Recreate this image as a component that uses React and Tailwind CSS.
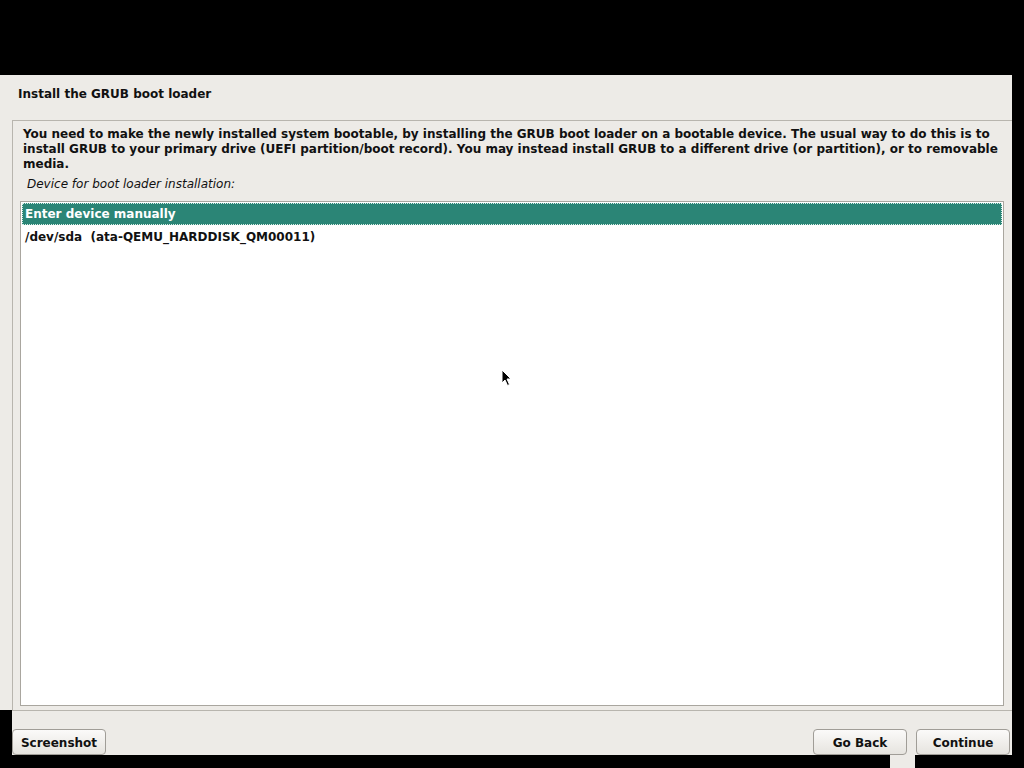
export default function App() {
  return (
    <div
      className="w-[1024px] h-[768px] bg-black overflow-hidden text-[#111]"
      style={{ fontFamily: '"DejaVu Sans", "Liberation Sans", sans-serif' }}
    >
      <div className="h-[75px]" />
      <div className="w-[1012px] h-[635px] bg-[#edebe7] flex flex-col">
        <div className="h-[45px] pt-[12px] pl-[18px] text-[12px] font-bold leading-[15px]">
          Install the GRUB boot loader
        </div>
        <div className="ml-[12px] flex-1 border-t border-l border-[#b8b5ae] flex flex-col pl-[7px] pr-[8px] pb-[4px]">
          <p className="mt-[6px] pl-[3px] text-[12px] font-bold leading-[15px]">
            You need to make the newly installed system bootable, by installing the GRUB boot loader on a bootable device. The usual way to do this is to install GRUB to your primary drive (UEFI partition/boot record). You may instead install GRUB to a different drive (or partition), or to removable media.
          </p>
          <div className="mt-[5px] pl-[7px] text-[12px] italic leading-[15px]">
            Device for boot loader installation:
          </div>
          <div className="mt-[9px] flex-1 bg-white border border-[#a9a69f] p-[1px] flex flex-col">
            <div className="h-[22px] bg-[#2b8576] border border-dotted border-[#d8efe8] text-white font-bold text-[12px] flex items-center pl-[2px]">
              Enter device manually
            </div>
            <div className="h-[23px] font-bold text-[12px] flex items-center pl-[3px] whitespace-pre">
              /dev/sda  (ata-QEMU_HARDDISK_QM00011)
            </div>
            <div className="flex-1 relative">
              <svg className="absolute left-[479px] top-[121px]" width="12" height="18" viewBox="0 0 12 18">
                <path d="M1 1 L1 14 L4 11 L6.5 16.5 L8.5 15.5 L6 10 L10 10 Z" fill="#000" stroke="#fff" strokeWidth="1" />
              </svg>
            </div>
          </div>
        </div>
      </div>
      <div className="ml-[12px] w-[1000px] h-[45px] bg-[#edebe7] flex items-end justify-between pr-[2px] border-t border-[#b8b5ae]">
        <Btn>Screenshot</Btn>
        <div className="flex gap-[9px]">
          <Btn>Go Back</Btn>
          <Btn>Continue</Btn>
        </div>
      </div>
      <div className="ml-[890px] w-[25px] h-[13px] bg-[#edebe7]" />
    </div>
  );
}

function Btn({ children }) {
  return (
    <button className="w-[94px] h-[26px] rounded-[4px] border border-[#a09d97] bg-gradient-to-b from-[#fbfaf9] to-[#e6e4df] text-[12px] font-bold text-[#111] flex items-center justify-center pt-[1px]">
      {children}
    </button>
  );
}
